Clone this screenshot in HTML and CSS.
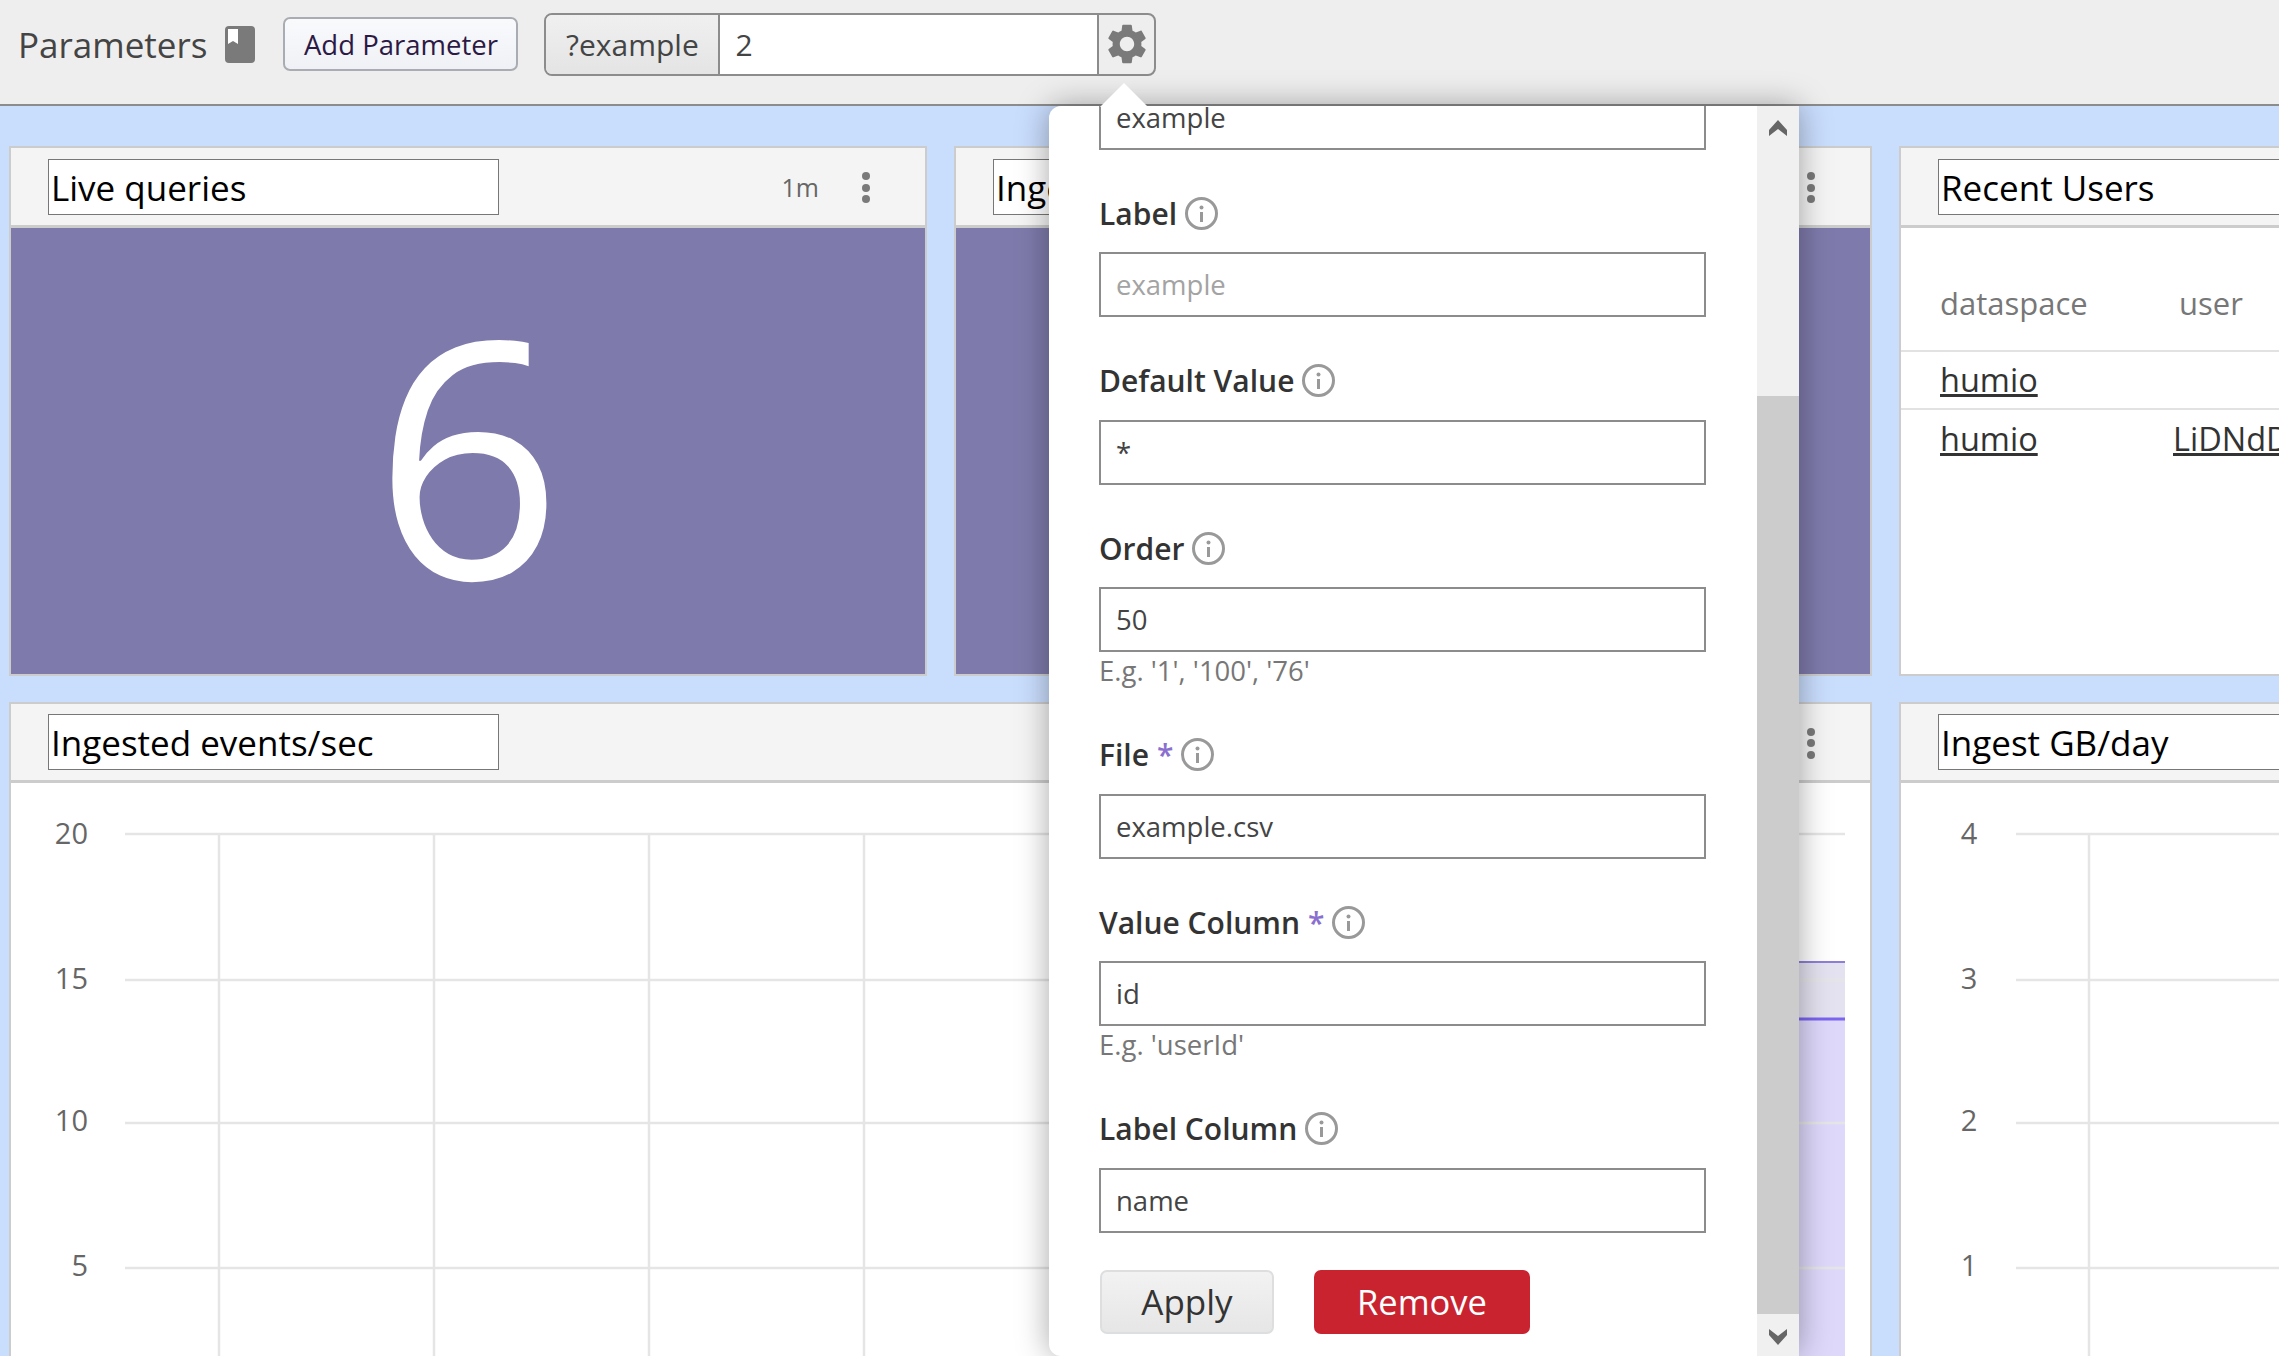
FILE: index.html
```html
<!DOCTYPE html>
<html>
<head>
<meta charset="utf-8">
<title>Parameters</title>
<link rel="stylesheet" href="styles.css">
</head>
<body>
<div class="toolbar">
	<span class="toolbar_title">Parameters</span>
	<svg class="book" width="30" height="37" viewBox="0 0 30 37"><path d="M4 0h22a4 4 0 0 1 4 4v29a4 4 0 0 1-4 4H4a4 4 0 0 1-4-4V4a4 4 0 0 1 4-4z" fill="#7a7a7a"/><path d="M3 3h10v15l-5-3-5 3z" fill="#fff"/></svg>
	<a class="add_btn">Add Parameter</a>
	<div class="param_group">
		<span class="param_name">?example</span>
		<span class="param_value">2</span>
		<span class="param_gear">
			<svg width="48" height="48" viewBox="0 0 24 24"><path fill="#7a7a7a" d="M19.14 12.94c.04-.3.06-.61.06-.94 0-.32-.02-.64-.07-.94l2.03-1.58c.18-.14.23-.41.12-.61l-1.92-3.32c-.12-.22-.37-.29-.59-.22l-2.39.96c-.5-.38-1.03-.7-1.62-.94l-.36-2.54c-.04-.24-.24-.41-.48-.41h-3.84c-.24 0-.43.17-.47.41l-.36 2.54c-.59.24-1.13.57-1.62.94l-2.39-.96c-.22-.08-.47 0-.59.22L2.74 8.87c-.12.21-.08.47.12.61l2.03 1.58c-.05.3-.09.63-.09.94s.02.64.07.94l-2.03 1.58c-.18.14-.23.41-.12.61l1.92 3.32c.12.22.37.29.59.22l2.39-.96c.5.38 1.03.7 1.62.94l.36 2.54c.05.24.24.41.48.41h3.84c.24 0 .44-.17.47-.41l.36-2.54c.59-.24 1.13-.56 1.62-.94l2.39.96c.22.08.47 0 .59-.22l1.92-3.32c.12-.22.07-.47-.12-.61l-2.01-1.58zM12 15.6c-1.98 0-3.6-1.62-3.6-3.6s1.62-3.6 3.6-3.6 3.6 1.62 3.6 3.6-1.62 3.6-3.6 3.6z"/></svg>
		</span>
	</div>
</div>

<div class="board">
	<div class="panel">
		<div class="panel_head">
			<div class="panel_title">Live queries</div>
			<span class="panel_time">1m</span>
			<span class="kebab"><i></i><i></i><i></i></span>
		</div>
		<div class="big_value">6</div>
	</div>
	<div class="panel">
		<div class="panel_head">
			<div class="panel_title">Ingest</div>
			<span class="kebab"><i></i><i></i><i></i></span>
		</div>
		<div class="big_value"></div>
	</div>
	<div class="panel">
		<div class="panel_head">
			<div class="panel_title panel_title_wide">Recent Users</div>
		</div>
		<div class="users">
			<div class="users_row users_head"><span>dataspace</span><span class="users_user">user</span></div>
			<div class="users_row"><a>humio</a></div>
			<div class="users_row"><a>humio</a><a class="users_link">LiDNdDk</a></div>
		</div>
	</div>

	<div class="panel panel_chart">
		<div class="panel_head">
			<div class="panel_title">Ingested events/sec</div>
			<span class="kebab"><i></i><i></i><i></i></span>
		</div>
		<!-- viewBox starts at the chart's place on the page, so the numbers are page pixels -->
		<svg class="chart" width="1859" height="574" viewBox="11 782 1859 574">
			<rect x="1400" y="961" width="445" height="57" fill="#e4e2f0"/>
			<rect x="1400" y="1018" width="445" height="338" fill="#ded8fb"/>
			<g class="grid">
				<path d="M125 833H1845M125 979H1845M125 1122H1845M125 1267H1845"/>
				<path d="M219 833V1356M434 833V1356M649 833V1356M864 833V1356M1079 833V1356M1294 833V1356M1509 833V1356M1724 833V1356"/>
			</g>
			<path d="M1400 961H1845" stroke="#8d7fd8" stroke-width="2"/>
			<path d="M1400 1018H1845" stroke="#7a64f0" stroke-width="3"/>
			<g class="axis" text-anchor="end">
				<text x="88" y="843">20</text>
				<text x="88" y="988">15</text>
				<text x="88" y="1130">10</text>
				<text x="88" y="1275">5</text>
			</g>
		</svg>
	</div>
	<div class="panel panel_chart">
		<div class="panel_head">
			<div class="panel_title panel_title_wide">Ingest GB/day</div>
		</div>
		<svg class="chart" width="378" height="574" viewBox="1901 782 378 574">
			<g class="grid">
				<path d="M2016 833H2279M2016 979H2279M2016 1122H2279M2016 1267H2279"/>
				<path d="M2089 833V1356"/>
			</g>
			<g class="axis" text-anchor="middle">
				<text x="1969" y="843">4</text>
				<text x="1969" y="988">3</text>
				<text x="1969" y="1130">2</text>
				<text x="1969" y="1275">1</text>
			</g>
		</svg>
	</div>
</div>

<div class="popover">
	<div class="popover_body">
		<div class="field field_cut">
			<div class="input">example</div>
		</div>
		<div class="field">
			<div class="label">Label <svg class="info" width="33" height="33" viewBox="0 0 33 33"><circle cx="16.5" cy="16.5" r="15" fill="none" stroke="#999" stroke-width="3"/><circle cx="16.5" cy="10.5" r="2" fill="#999"/><path d="M16.5 15v10" stroke="#999" stroke-width="3"/></svg></div>
			<div class="input input_empty">example</div>
		</div>
		<div class="field">
			<div class="label">Default Value <svg class="info" width="33" height="33" viewBox="0 0 33 33"><circle cx="16.5" cy="16.5" r="15" fill="none" stroke="#999" stroke-width="3"/><circle cx="16.5" cy="10.5" r="2" fill="#999"/><path d="M16.5 15v10" stroke="#999" stroke-width="3"/></svg></div>
			<div class="input">*</div>
		</div>
		<div class="field field_hinted">
			<div class="label">Order <svg class="info" width="33" height="33" viewBox="0 0 33 33"><circle cx="16.5" cy="16.5" r="15" fill="none" stroke="#999" stroke-width="3"/><circle cx="16.5" cy="10.5" r="2" fill="#999"/><path d="M16.5 15v10" stroke="#999" stroke-width="3"/></svg></div>
			<div class="input">50</div>
			<div class="hint">E.g. '1', '100', '76'</div>
		</div>
		<div class="field">
			<div class="label">File <b>*</b> <svg class="info" width="33" height="33" viewBox="0 0 33 33"><circle cx="16.5" cy="16.5" r="15" fill="none" stroke="#999" stroke-width="3"/><circle cx="16.5" cy="10.5" r="2" fill="#999"/><path d="M16.5 15v10" stroke="#999" stroke-width="3"/></svg></div>
			<div class="input">example.csv</div>
		</div>
		<div class="field field_hinted">
			<div class="label">Value Column <b>*</b> <svg class="info" width="33" height="33" viewBox="0 0 33 33"><circle cx="16.5" cy="16.5" r="15" fill="none" stroke="#999" stroke-width="3"/><circle cx="16.5" cy="10.5" r="2" fill="#999"/><path d="M16.5 15v10" stroke="#999" stroke-width="3"/></svg></div>
			<div class="input">id</div>
			<div class="hint">E.g. 'userId'</div>
		</div>
		<div class="field field_last">
			<div class="label">Label Column <svg class="info" width="33" height="33" viewBox="0 0 33 33"><circle cx="16.5" cy="16.5" r="15" fill="none" stroke="#999" stroke-width="3"/><circle cx="16.5" cy="10.5" r="2" fill="#999"/><path d="M16.5 15v10" stroke="#999" stroke-width="3"/></svg></div>
			<div class="input">name</div>
		</div>
		<div class="popover_btns">
			<a class="btn_apply">Apply</a>
			<a class="btn_remove">Remove</a>
		</div>
	</div>
	<div class="scrollbar">
		<span class="scroll_up"><svg width="18" height="16" viewBox="0 0 18 16"><path d="M9 0l9 10v6l-9-7-9 7v-6z" fill="#666"/></svg></span>
		<span class="scroll_thumb"></span>
		<span class="scroll_down"><svg width="18" height="16" viewBox="0 0 18 16"><path d="M9 16L0 6V0l9 7 9-7v6z" fill="#666"/></svg></span>
	</div>
</div>
</body>
</html>
```

FILE: styles.css
```css
*{ margin:0; padding:0; box-sizing:border-box;}
html,body{ height:100%; overflow:hidden;}
body{ background:#c9ddfd; font-family:"Open Sans","Liberation Sans",sans-serif; color:#333; position:relative;}

.toolbar{ height:106px; background:#eee; border-bottom:2px solid #8c8c8c; display:flex; align-items:center; padding:0 0 16px 18px;}
.toolbar_title{ font-size:35px; color:#444; margin-right:18px;}
.book{ margin-right:28px;}
.add_btn{ height:54px; width:235px; border:2px solid #a9adb3; border-radius:7px; background:linear-gradient(#f9fafc,#eff1f6); color:#2c1a45; font-size:27.5px; display:flex; align-items:center; justify-content:center; margin-right:26px;}
.param_group{ width:612px; height:63px; border:2px solid #8c8c8c; border-radius:8px; display:flex; overflow:hidden; font-size:30px; color:#444;}
.param_name{ width:174px; background:linear-gradient(#f0f0f0,#e4e4e4); border-right:2px solid #8c8c8c; display:flex; align-items:center; justify-content:center;}
.param_value{ width:377px; background:#fff; padding-left:15px; display:flex; align-items:center;}
.param_gear{ flex:1; border-left:2px solid #8c8c8c; display:flex; align-items:center; justify-content:center;}

.board{ display:grid; grid-template-columns:918px 918px 918px; grid-template-rows:530px 654px; column-gap:27px; row-gap:26px; padding:40px 0 0 9px;}
.panel{ background:#fff; border:2px solid #ccc; display:flex; flex-direction:column; overflow:hidden;}
.panel_chart{ border-bottom:0;}
.panel_chart:nth-child(4){ grid-column:1 / span 2;}
.panel_head{ height:80px; flex:none; background:#f4f4f4; border-bottom:3px solid #ccc; display:flex; align-items:center; padding:0 55px 0 37px;}
.panel_chart .panel_head{ height:79px;}
.panel_title{ width:451px; height:56px; background:#fff; border:1px solid #777; color:#000; font-size:35px; line-height:56px; padding-left:2px; overflow:hidden; white-space:nowrap; margin-right:auto;}
.panel_title_wide{ flex:none;}
.panel_time{ font-size:25px; color:#666; margin-right:43px;}
.kebab{ width:8px; margin-top:2px; display:flex; flex-direction:column; gap:3.5px;}
.kebab i{ display:block; width:8px; height:8px; border-radius:50%; background:#7a7a7a;}

.big_value{ flex:1; background:#7e7aab; color:#fff; font-size:330px; line-height:1; display:flex; align-items:center; justify-content:center;}

.users{ flex:1;}
.users_row{ height:58px; border-bottom:2px solid #e2e2e2; display:flex; align-items:center; padding:0 0 2px 39px; font-size:32.5px;}
.users_row a{ color:#333; text-decoration:underline; width:233px; flex:none;}
.users_row:last-child{ border-bottom:0;}
.users_head{ height:124px; padding-top:28px; padding-bottom:0; color:#777; font-size:31px;}
.users_head span{ width:239px; flex:none;}
.users_row a.users_link{ width:auto;}

.chart{ display:block; flex:none;}
.grid path{ stroke:#e5e5e5; stroke-width:2.5; fill:none;}
.axis text{ font-size:29px; fill:#666;}

.popover{ position:absolute; left:1049px; top:106px; width:750px; height:1250px; background:#fff; border-radius:12px 0 12px 12px; box-shadow:0 0 32px rgba(0,0,0,.35); display:flex;}
.popover:before{ content:""; position:absolute; left:51px; top:-23px; border-left:24px solid transparent; border-right:24px solid transparent; border-bottom:24px solid #fff;}
.popover_body{ width:708px; height:100%; overflow:hidden; padding:0 51px 0 50px;}
.field{ margin-bottom:43.5px;}
.field_cut{ margin-top:-21.5px;}
.field_hinted{ margin-bottom:48.5px;}
.field_last{ margin-bottom:37px;}
.label{ height:40px; margin-bottom:19px; display:flex; align-items:center; gap:8px; font-size:30px; font-weight:600; color:#333;}
.label b{ color:#8a6fd0; font-weight:600;}
.input{ height:65px; border:2px solid #8c8c8c; padding-left:15px; font-size:27.5px; line-height:61px; color:#444;}
.input_empty{ color:#a3a3a3;}
.hint{ height:30px; margin-top:4px; font-size:27.5px; line-height:30px; color:#777;}
.popover_btns{ display:flex; gap:40px; padding-left:1px;}
.btn_apply{ width:174px; height:64px; border:2px solid #dcdee0; border-radius:7px; background:linear-gradient(#f2f2f2,#e6e6e6); font-size:35px; display:flex; align-items:center; justify-content:center;}
.btn_remove{ width:216px; height:64px; border-radius:7px; background:#c92330; color:#fff; font-size:34.5px; display:flex; align-items:center; justify-content:center;}

.scrollbar{ width:42px; height:100%; background:#f0f0f0; display:flex; flex-direction:column;}
.scroll_up{ height:290px; display:flex; justify-content:center; padding-top:14px;}
.scroll_thumb{ height:918px; background:#ccc;}
.scroll_down{ height:42px; display:flex; justify-content:center; padding-top:15px;}
```
